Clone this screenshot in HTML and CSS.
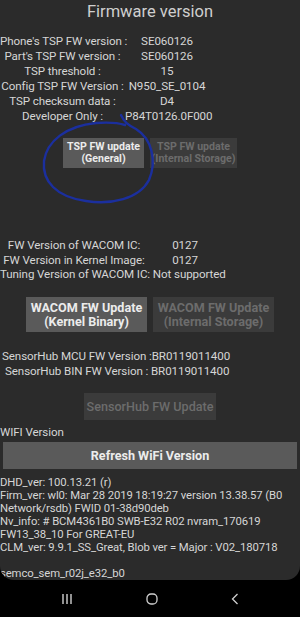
FILE: index.html
```html
<!DOCTYPE html>
<html lang="en">
<head>
    <meta charset="UTF-8">
    <meta name="viewport" content="width=device-width, initial-scale=1.0">
    <title>Firmware version</title>
    <link rel="stylesheet" href="styles.css">
</head>
<body>
    <div class="screen">
        <h1 class="title">Firmware version</h1>

        <!-- TSP info -->
        <div class="tsp-table">
            <span class="lbl">Phone's TSP FW version :</span><span class="val">SE060126</span>
            <span class="lbl">Part's TSP FW version :</span><span class="val">SE060126</span>
            <span class="lbl">TSP threshold :</span><span class="val">15</span>
            <span class="lbl">Config TSP FW Version :</span><span class="val">N950_SE_0104</span>
            <span class="lbl">TSP checksum data :</span><span class="val">D4</span>
            <span class="lbl">Developer Only :</span><span class="val">P84T0126.0F000</span>
        </div>

        <div class="btn-row tsp-btns">
            <button class="btn small">TSP FW update<br>(General)</button>
            <button class="btn small off">TSP FW update<br>(Internal Storage)</button>
            <!-- pen mark over the screenshot -->
            <svg class="scribble" width="130" height="100" viewBox="0 0 130 100">
                <path d="M80,2 C83,9 87,12 95,16 C111,26 116,48 108,67 C98,86 70,92 45,88 C15,84 1,68 3,48 C6,28 25,13 55,10 C68,9 78,10 84,12"
                      fill="none" stroke="#1b2f9e" stroke-width="2.4" stroke-linecap="round"/>
            </svg>
        </div>

        <!-- WACOM info -->
        <div class="wacom-table">
            <span class="lbl">FW Version of WACOM IC:</span><span class="val">0127</span>
            <span class="lbl">FW Version in Kernel Image:</span><span class="val">0127</span>
        </div>
        <p class="line">Tuning Version of WACOM IC: Not supported</p>

        <div class="btn-row wacom-btns">
            <button class="btn big">WACOM FW Update<br>(Kernel Binary)</button>
            <button class="btn big off">WACOM FW Update<br>(Internal Storage)</button>
        </div>

        <p class="line hub1">SensorHub MCU FW Version :BR0119011400</p>
        <p class="line hub2">SensorHub BIN FW Version : BR0119011400</p>

        <div class="btn-row hub-btns">
            <button class="btn hub off">SensorHub FW Update</button>
        </div>

        <p class="line wifi-label">WIFI Version</p>
        <button class="btn refresh">Refresh WiFi Version</button>

        <div class="wifi-info">
            DHD_ver: 100.13.21 (r)<br>
            Firm_ver: wl0: Mar 28 2019 18:19:27 version 13.38.57 (B0<br>
            Network/rsdb) FWID 01-38d90deb<br>
            Nv_info: # BCM4361B0 SWB-E32 R02 nvram_170619<br>
            FW13_38_10 For GREAT-EU<br>
            CLM_ver: 9.9.1_SS_Great, Blob ver = Major : V02_180718<br>
            <br>
            semco_sem_r02j_e32_b0
        </div>
    </div>

    <!-- navigation bar -->
    <div class="navbar">
        <svg width="12" height="12" viewBox="0 0 12 12">
            <path d="M2,1 V11 M6,1 V11 M10,1 V11" stroke="#cfcfcf" stroke-width="1.4"/>
        </svg>
        <svg width="12" height="12" viewBox="0 0 12 12">
            <rect x="1" y="1" width="10" height="10" rx="4" fill="none" stroke="#cfcfcf" stroke-width="1.3"/>
        </svg>
        <svg width="8" height="12" viewBox="0 0 8 12">
            <path d="M6.5,1 L1.5,6 L6.5,11" fill="none" stroke="#cfcfcf" stroke-width="1.3"/>
        </svg>
    </div>
</body>
</html>
```

FILE: styles.css
```css
* {
    margin: 0;
    padding: 0;
    box-sizing: border-box;
}

body {
    background: #000;
    font-family: Roboto, "Liberation Sans", sans-serif;
    color: #d6d6d6;
    width: 300px;
    overflow: hidden;
}

.screen {
    background: #2b2b2b;
    height: 580px;
    border-radius: 0 0 14px 14px;
    overflow: hidden;
}

.title {
    font-size: 16.5px;
    font-weight: normal;
    text-align: center;
    line-height: 24px;
    color: #cfcfcf;
}

.tsp-table, .wacom-table {
    display: grid;
    font-size: 11.6px;
    letter-spacing: -0.1px;
    line-height: 15px;
    text-align: center;
    white-space: nowrap;
}

.tsp-table {
    grid-template-columns: 125px 84px;
    margin-top: 10px;
}

.wacom-table {
    grid-template-columns: 148px 74px;
    line-height: 14.5px;
    margin-top: 70px;
}

.line {
    font-size: 11.6px;
    letter-spacing: -0.1px;
    line-height: 15px;
    white-space: nowrap;
}

.btn-row {
    display: flex;
    justify-content: center;
    gap: 6px;
}

.btn {
    border: none;
    padding: 0;
    background: #5a5a5a;
    color: #ececec;
    font-family: Roboto, "Liberation Sans", sans-serif;
    font-weight: bold;
    white-space: nowrap;
}

.btn.off {
    background: #3b3b3b;
    color: #6c6c6c;
}

.tsp-btns {
    position: relative;
    margin-top: 14px;
}

.btn.small {
    font-size: 10.6px;
    line-height: 12px;
    height: 30px;
}

.btn.small:first-child {
    width: 81px;
}

.btn.small.off {
    width: 87px;
}

.scribble {
    position: absolute;
    left: 41px;
    top: -25px;
}

.wacom-btns {
    margin-top: 15px;
}

.btn.big {
    width: 121px;
    height: 35px;
    font-size: 12.6px;
    line-height: 13.5px;
}

.hub1 {
    margin-top: 17px;
    padding-left: 2px;
}

.hub2 {
    padding-left: 5px;
}

.hub-btns {
    margin-top: 14px;
}

.btn.hub {
    width: 132px;
    height: 27px;
    font-size: 12.6px;
    font-weight: 500;
}

.wifi-label {
    margin-top: 5px;
}

.btn.refresh {
    display: block;
    width: 294px;
    height: 27px;
    margin: 2px auto 0;
    font-size: 12.6px;
}

.wifi-info {
    margin-top: 7px;
    font-size: 11.3px;
    letter-spacing: -0.1px;
    line-height: 13px;
    white-space: nowrap;
}

.navbar {
    height: 37px;
    display: flex;
    align-items: center;
    justify-content: space-between;
    padding: 0 61px 0 61px;
}
```
